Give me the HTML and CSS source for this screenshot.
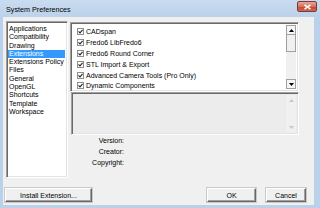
FILE: index.html
```html
<!DOCTYPE html>
<html>
<head>
<meta charset="utf-8">
<link rel="stylesheet" href="styles.css">
</head>
<body>
<div class="window">
  <div class="titlebar">
    <span class="title">System Preferences</span>
    <div class="close"><svg width="9" height="6" viewBox="0 0 9 6"><path d="M1.5 0.8 L7.5 5.2 M7.5 0.8 L1.5 5.2" stroke="#fff" stroke-width="1.6"/></svg></div>
  </div>
  <div class="client">
    <div class="main">
      <ul class="cats sunken">
        <li>Applications</li>
        <li>Compatibility</li>
        <li>Drawing</li>
        <li class="sel">Extensions</li>
        <li>Extensions Policy</li>
        <li>Files</li>
        <li>General</li>
        <li>OpenGL</li>
        <li>Shortcuts</li>
        <li>Template</li>
        <li>Workspace</li>
      </ul>
      <div class="right">
        <div class="extlist sunken">
          <ul class="exts">
            <li><span class="cb"><svg width="5" height="5" viewBox="0 0 5 5"><path d="M0.5 2.4 L2 3.9 L4.6 0.9" stroke="#222" stroke-width="1.1" fill="none"/></svg></span>CADspan</li>
            <li><span class="cb"><svg width="5" height="5" viewBox="0 0 5 5"><path d="M0.5 2.4 L2 3.9 L4.6 0.9" stroke="#222" stroke-width="1.1" fill="none"/></svg></span>Fredo6 LibFredo6</li>
            <li><span class="cb"><svg width="5" height="5" viewBox="0 0 5 5"><path d="M0.5 2.4 L2 3.9 L4.6 0.9" stroke="#222" stroke-width="1.1" fill="none"/></svg></span>Fredo6 Round Corner</li>
            <li><span class="cb"><svg width="5" height="5" viewBox="0 0 5 5"><path d="M0.5 2.4 L2 3.9 L4.6 0.9" stroke="#222" stroke-width="1.1" fill="none"/></svg></span>STL Import &amp; Export</li>
            <li><span class="cb"><svg width="5" height="5" viewBox="0 0 5 5"><path d="M0.5 2.4 L2 3.9 L4.6 0.9" stroke="#222" stroke-width="1.1" fill="none"/></svg></span>Advanced Camera Tools (Pro Only)</li>
            <li><span class="cb"><svg width="5" height="5" viewBox="0 0 5 5"><path d="M0.5 2.4 L2 3.9 L4.6 0.9" stroke="#222" stroke-width="1.1" fill="none"/></svg></span>Dynamic Components</li>
          </ul>
          <div class="sbar">
            <div class="sbtn"><svg width="5" height="3" viewBox="0 0 5 3"><path d="M0 3 L2.5 0 L5 3 Z" fill="#000"/></svg></div>
            <div class="thumb"></div>
            <div class="track"></div>
            <div class="sbtn"><svg width="5" height="3" viewBox="0 0 5 3"><path d="M0 0 L2.5 3 L5 0 Z" fill="#000"/></svg></div>
          </div>
        </div>
        <div class="desc sunken">
          <div class="desctext"></div>
          <div class="sbar dis">
            <div class="sbtn"><svg width="5" height="3" viewBox="0 0 5 3"><path d="M0 3 L2.5 0 L5 3 Z" fill="#c8c8c8"/></svg></div>
            <div class="track"></div>
            <div class="sbtn"><svg width="5" height="3" viewBox="0 0 5 3"><path d="M0 0 L2.5 3 L5 0 Z" fill="#c8c8c8"/></svg></div>
          </div>
        </div>
        <div class="info">
          <div class="lbl">Version:</div>
          <div class="lbl">Creator:</div>
          <div class="lbl">Copyright:</div>
        </div>
      </div>
    </div>
    <div class="buttons">
      <button class="btn install">Install Extension...</button>
      <div class="spacer"></div>
      <button class="btn ok">OK</button>
      <button class="btn cancel">Cancel</button>
    </div>
  </div>
</div>
</body>
</html>
```
FILE: styles.css
```css
* { box-sizing: border-box; }
html, body { margin: 0; padding: 0; }
body {
  width: 320px;
  height: 208px;
  overflow: hidden;
  background: #b9d1ea;
  font-family: "Liberation Sans", Arial, sans-serif;
  font-size: 7px;
  color: #000;
}
.window {
  width: 320px;
  height: 208px;
  display: flex;
  flex-direction: column;
  background: linear-gradient(#c9dbef, #b9d1ea 20px, #b9d1ea);
}
.titlebar {
  height: 17px;
  display: flex;
  align-items: center;
  padding-left: 6px;
  padding-right: 3px;
  flex-shrink: 0;
}
.title {
  font-size: 7.2px;
  color: #000;
  flex: 1;
  padding-top: 1px;
}
.close {
  width: 20px;
  height: 11px;
  margin-top: -4px;
  border: 1px solid #7a3b36;
  border-radius: 2px;
  background: linear-gradient(#e8a797, #d7705d 50%, #c24a33 55%, #d1664f);
  display: flex;
  align-items: center;
  justify-content: center;
}
.client {
  flex: 1;
  margin: 0 6px 3px 3px;
  background: #f0f0f0;
  display: flex;
  flex-direction: column;
}
.main {
  display: flex;
  padding: 4px 0 0 3px;
}
.sunken {
  border-top: 1px solid #a0a0a0;
  border-left: 1px solid #a0a0a0;
  border-right: 1px solid #fff;
  border-bottom: 1px solid #fff;
  box-shadow: inset 1px 1px 0 #696969, inset -1px -1px 0 #e3e3e3;
}
.cats {
  list-style: none;
  margin: 0;
  width: 62px;
  height: 157px;
  background: #fff;
  padding: 3px 2px 0 1px;
}
.cats li {
  height: 8.3px;
  line-height: 8.3px;
  padding-left: 1px;
  white-space: nowrap;
}
.cats li.sel {
  background: #3399ff;
  color: #fff;
}
.right {
  margin-left: 2px;
  width: 229px;
  margin-top: 1px;
  display: flex;
  flex-direction: column;
}
.extlist {
  height: 70px;
  background: #fff;
  display: flex;
  padding: 2px 2px 2px 2px;
}
.exts {
  list-style: none;
  margin: 0;
  padding: 1px 0 0 0;
  flex: 1;
}
.exts li {
  height: 10.9px;
  display: flex;
  align-items: center;
  white-space: nowrap;
}
.cb {
  width: 7px;
  height: 7px;
  margin-left: 4px;
  margin-right: 2px;
  border: 1px solid #8e8f8f;
  background: #fff;
  display: flex;
  align-items: center;
  justify-content: center;
}
.cb svg { display: block; }
.sbar {
  width: 10px;
  display: flex;
  flex-direction: column;
  background: #f0f0f0;
}
.sbtn {
  height: 10px;
  border: 1px solid #a0a0a0;
  background: #f5f5f5;
  display: flex;
  align-items: center;
  justify-content: center;
}
.sbtn svg { display: block; }
.thumb {
  height: 17px;
  border: 1px solid #a0a0a0;
  border-top: none;
  background: #f0f0f0;
}
.track {
  flex: 1;
  background: #f0f0f0;
}
.sbar.dis .sbtn {
  border-color: transparent;
  background: #f0f0f0;
}
.desc {
  height: 43px;
  margin-left: 1px;
  display: flex;
  padding: 2px;
  background: #ececec;
}
.desctext { flex: 1; }
.info {
  display: flex;
  flex-direction: column;
  padding-top: 0px;
}
.lbl {
  width: 54px;
  height: 11px;
  line-height: 11px;
  text-align: right;
}
.buttons {
  margin-top: auto;
  margin-bottom: 3px;
  display: flex;
  padding: 0 8px 0 2px;
}
.spacer { flex: 1; }
.btn {
  font-family: "Liberation Sans", Arial, sans-serif;
  font-size: 7px;
  color: #000;
  height: 14px;
  padding: 0;
  background: #f0f0f0;
  border-top: 1px solid #fff;
  border-left: 1px solid #fff;
  border-right: 1px solid #696969;
  border-bottom: 1px solid #696969;
  box-shadow: inset -1px -1px 0 #a0a0a0, 0 0 0 0 transparent;
  outline: 1px solid #c9c9c9;
}
.install { width: 87px; }
.ok { width: 49px; margin-right: 10px; }
.cancel { width: 40px; }
```
